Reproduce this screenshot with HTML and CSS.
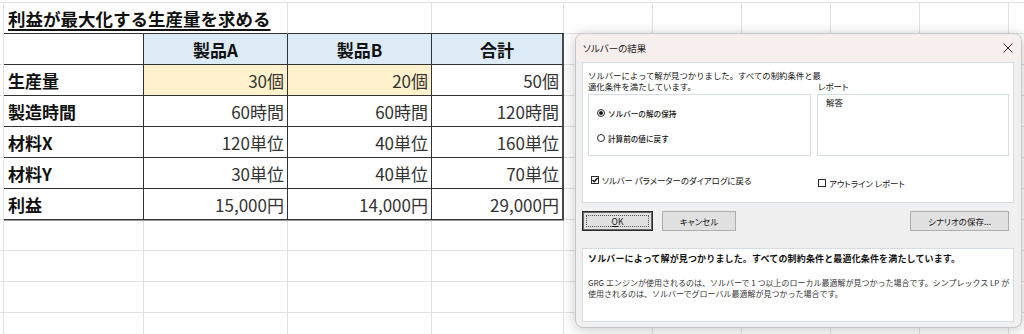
FILE: index.html
```html
<!DOCTYPE html>
<html lang="ja">
<head>
<meta charset="utf-8">
<title>ソルバーの結果</title>
<link rel="stylesheet" href="styles.css">
</head>
<body>
<div class="sheet">
  <div class="title-cell"><span class="title">利益が最大化する生産量を求める</span></div>
  <div class="edge"></div>
  <div class="edge"></div>

  <div class="cell first"></div>
  <div class="cell head">製品A</div>
  <div class="cell head">製品B</div>
  <div class="cell head last">合計</div>

  <div class="cell first lbl">生産量</div>
  <div class="cell num input">30個</div>
  <div class="cell num input">20個</div>
  <div class="cell num last">50個</div>

  <div class="cell first lbl">製造時間</div>
  <div class="cell num">60時間</div>
  <div class="cell num">60時間</div>
  <div class="cell num last">120時間</div>

  <div class="cell first lbl">材料X</div>
  <div class="cell num">120単位</div>
  <div class="cell num">40単位</div>
  <div class="cell num last">160単位</div>

  <div class="cell first lbl">材料Y</div>
  <div class="cell num">30単位</div>
  <div class="cell num">40単位</div>
  <div class="cell num last">70単位</div>

  <div class="cell first lbl bottom">利益</div>
  <div class="cell num bottom">15,000円</div>
  <div class="cell num bottom">14,000円</div>
  <div class="cell num last bottom">29,000円</div>
</div>

<div class="dialog">
  <div class="titlebar">
    <span class="dtitle">ソルバーの結果</span>
    <svg class="close" width="10" height="10" viewBox="0 0 10 10"><path d="M0.5 0.5L9.5 9.5M9.5 0.5L0.5 9.5" stroke="#2b2b2b" stroke-width="1" fill="none"/></svg>
  </div>
  <div class="dbody">
    <div class="panel top">
      <div class="pgrid">
        <p class="msg">ソルバーによって解が見つかりました。すべての制約条件と最適化条件を満たしています。</p>
        <div class="rlabel">レポート</div>
        <div class="group">
          <div class="radio"><span class="rb on"></span>ソルバーの解の保持</div>
          <div class="radio"><span class="rb"></span>計算前の値に戻す</div>
        </div>
        <div class="list"><span>解答</span></div>
        <div class="check back"><span class="cb"><svg width="8" height="8" viewBox="0 0 8 8"><path d="M1.5 4L3.2 5.8L6.6 2" stroke="#111" stroke-width="1.4" fill="none"/></svg></span>ソルバー パラメーターのダイアログに戻る</div>
        <div class="check outline"><span class="cb"></span>アウトライン レポート</div>
      </div>
    </div>
    <div class="buttons">
      <div class="btn def"><span class="focus"><u>O</u>K</span></div>
      <div class="btn cancel">キャンセル</div>
      <div class="btn wide">シナリオの保存...</div>
    </div>
    <div class="panel bottom">
      <p class="strong">ソルバーによって解が見つかりました。すべての制約条件と最適化条件を満たしています。</p>
      <p class="note">GRG エンジンが使用されるのは、ソルバーで 1 つ以上のローカル最適解が見つかった場合です。シンプレックス LP が<br>使用されるのは、ソルバーでグローバル最適解が見つかった場合です。</p>
    </div>
  </div>
</div>
</body>
</html>
```

FILE: styles.css
```css
html, body {
  margin: 0;
  padding: 0;
  overflow: hidden;
  background: #ffffff;
}

body {
  width: 1024px;
  height: 334px;
  font-family: "Noto Sans CJK JP", "Noto Sans", sans-serif;
  color: #111;
}

/* ---------- spreadsheet ---------- */
.sheet {
  margin-top: 2px;
  border-top: 1px solid #e2e2e2;
  display: grid;
  grid-template-columns: 4px 140px 144px 144px 132px 1fr;
  grid-template-rows: repeat(11, 31px);
  background-image:
    linear-gradient(to right,
      transparent 0 3px, #e2e2e2 3px 4px,
      transparent 4px 143px, #e2e2e2 143px 144px,
      transparent 144px 287px, #e2e2e2 287px 288px,
      transparent 288px 431px, #e2e2e2 431px 432px,
      transparent 432px 563px, #e2e2e2 563px 564px,
      transparent 564px 652px, #e2e2e2 652px 653px,
      transparent 653px 741px, #e2e2e2 741px 742px,
      transparent 742px 830px, #e2e2e2 830px 831px,
      transparent 831px 919px, #e2e2e2 919px 920px,
      transparent 920px 1008px, #e2e2e2 1008px 1009px,
      transparent 1009px),
    repeating-linear-gradient(to bottom, transparent 0 30px, #e2e2e2 30px 31px);
  font-size: 17px;
}

.title-cell {
  grid-column: 2 / span 2;
  box-sizing: border-box;
  background: #fff;
  border-right: 1px solid #e2e2e2;
  border-bottom: 1px solid #333;
  display: flex;
  align-items: center;
  padding-left: 4px;
}

.title {
  font-size: 17.5px;
  font-weight: 700;
  text-decoration: underline;
  text-decoration-thickness: 1.5px;
  text-underline-offset: 3px;
  white-space: nowrap;
  color: #111;
}

.edge {
  border-bottom: 1px solid #333;
}

.cell {
  box-sizing: border-box;
  border-right: 1px solid #333;
  border-bottom: 1px solid #333;
  display: flex;
  align-items: center;
  background: #fff;
  white-space: nowrap;
}

.cell.first {
  grid-column-start: 2;
}

.cell.last {
  border-right: 2px solid #4a4a4a;
}

.cell.bottom {
  border-bottom: 1px solid #333;
  box-shadow: 0 1px 0 #9a9a9a;
}

.head {
  background: #ddebf7;
  justify-content: center;
  font-weight: 700;
  color: #111;
}

.lbl {
  padding-left: 4px;
  font-weight: 700;
  color: #111;
}

.num {
  justify-content: flex-end;
  padding-right: 3px;
  color: #333;
}

.input {
  background: #fff2cc;
}

/* ---------- dialog ---------- */
.dialog {
  position: absolute;
  left: 575px;
  top: 33px;
  width: 447px;
  box-sizing: border-box;
  border: 1px solid #c6c6c6;
  border-radius: 8px;
  background: #f0f0f0;
  box-shadow: 0 2px 14px rgba(0, 0, 0, 0.22);
  overflow: hidden;
  font-size: 8.5px;
  color: #111;
}

.titlebar {
  height: 27px;
  background: #f6efed;
  display: flex;
  align-items: center;
  justify-content: space-between;
  padding: 0 8px 0 7px;
}

.dtitle {
  font-size: 9.5px;
  font-feature-settings: "palt";
  color: #1a1a1a;
}

.close {
  display: block;
}

.dbody {
  padding: 1px 7px 5px 6px;
}

.panel {
  box-sizing: border-box;
  background: #fff;
  border: 1px solid #d6dce4;
}

.panel.top {
  height: 141px;
  padding: 7px 4px 0 5px;
}

.pgrid {
  display: grid;
  grid-template-columns: 223px 192px;
  column-gap: 6px;
  row-gap: 3px;
  align-items: start;
}

.msg {
  margin: 0;
  width: 240px;
  font-size: 8.4px;
  line-height: 10.5px;
  color: #111;
}

.rlabel {
  align-self: end;
  line-height: 10.5px;
  font-feature-settings: "palt";
  font-size: 8.5px;
  padding-left: 1px;
}

.group,
.list {
  box-sizing: border-box;
  height: 62px;
  border: 1px solid #d6dce4;
}

.group {
  display: flex;
  flex-direction: column;
  gap: 13px;
  padding: 12px 0 0 8px;
}

.radio {
  display: flex;
  align-items: center;
  gap: 3px;
  height: 12px;
  font-size: 7.6px;
  font-weight: 500;
}

.rb {
  width: 8px;
  height: 8px;
  box-sizing: border-box;
  border: 1px solid #2a2a2a;
  border-radius: 50%;
  display: flex;
  align-items: center;
  justify-content: center;
}

.rb.on::after {
  content: "";
  width: 4px;
  height: 4px;
  border-radius: 50%;
  background: #1a1a1a;
}

.list {
  padding: 2px 0 0 8px;
  font-size: 8.5px;
  line-height: 10px;
}

.check {
  display: flex;
  align-items: center;
  gap: 3px;
  height: 12px;
  margin-top: 15px;
  font-size: 8.4px;
  font-feature-settings: "palt";
  white-space: nowrap;
}

.check.back {
  margin-left: 3px;
}

.check.outline {
  margin-left: 1px;
  margin-top: 18px;
}

.cb {
  width: 8px;
  height: 8px;
  box-sizing: border-box;
  border: 1px solid #2a2a2a;
  background: #fff;
  display: flex;
  align-items: center;
  justify-content: center;
}

.cb svg {
  display: block;
  flex: none;
}

.buttons {
  display: flex;
  margin-top: 8px;
  height: 20px;
}

.btn {
  box-sizing: border-box;
  height: 20px;
  background: #e1e1e1;
  border: 1px solid #adadad;
  display: flex;
  align-items: center;
  justify-content: center;
  font-size: 8.5px;
  font-feature-settings: "palt";
  color: #111;
}

.btn.def {
  width: 71px;
  border: 1px solid #2a2a2a;
  box-shadow: inset 0 0 0 1px #6a6a6a;
  padding: 3px;
}

.focus {
  flex: 1;
  align-self: stretch;
  border: 1px dotted #555;
  display: flex;
  align-items: center;
  justify-content: center;
}

.btn.cancel {
  width: 74px;
  margin-left: 9px;
}

.btn.wide {
  width: 99px;
  margin-left: auto;
  margin-right: 5px;
}

.panel.bottom {
  margin-top: 17px;
  height: 74px;
  padding: 4px 4px 0 5px;
}

.strong {
  margin: 0;
  font-size: 9px;
  font-weight: 700;
  line-height: 11px;
  letter-spacing: 0.15px;
  white-space: nowrap;
}

.note {
  margin: 14px 0 0;
  font-size: 8px;
  line-height: 10.5px;
  color: #333;
  white-space: nowrap;
}
```
